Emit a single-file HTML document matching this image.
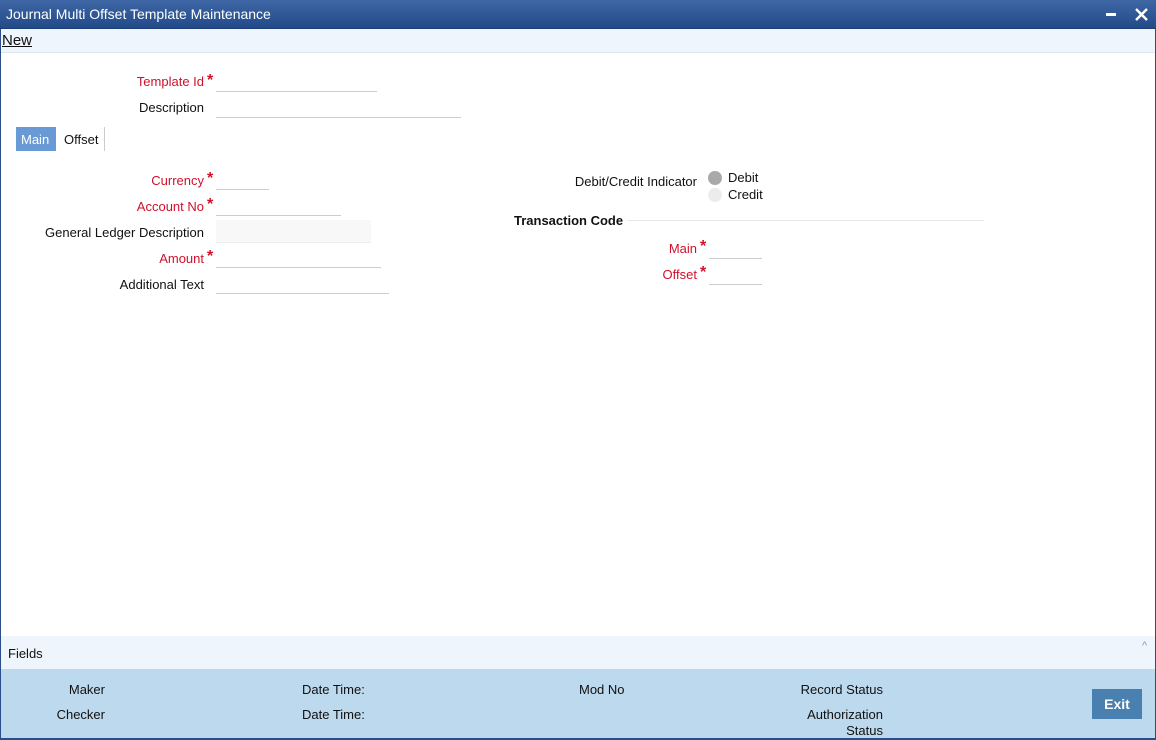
<!DOCTYPE html>
<html><head><style>
*{margin:0;padding:0;box-sizing:border-box}
body{width:1156px;height:740px;position:relative;background:#fff;font-family:"Liberation Sans",Arial,sans-serif;font-size:13px;color:#111;overflow:hidden}
.a{position:absolute;white-space:nowrap}
.r{color:#d0112b}
.s{font-size:16px;font-weight:bold}
.lbl{position:absolute;text-align:right;white-space:nowrap}
.in{position:absolute;border-bottom:1px solid #ccc;height:1px}
</style></head><body>
<div class="a" style="left:0;top:0;width:1156px;height:29px;background:linear-gradient(#3f67a6,#234a88);border-bottom:1px solid #1d3f78"></div>
<div class="a" style="left:6px;top:6px;color:#fff;font-size:14px">Journal Multi Offset Template Maintenance</div>
<div class="a" style="left:1106px;top:13px;width:10px;height:3px;background:#fff"></div>
<svg class="a" style="left:1135px;top:8px" width="13" height="13"><path d="M1 1L12 12M12 1L1 12" stroke="#fff" stroke-width="2.4"/></svg>
<div class="a" style="left:0;top:29px;width:1px;height:711px;background:#2b4e8a"></div>
<div class="a" style="right:0;top:29px;width:1px;height:711px;background:#2b4e8a"></div>
<div class="a" style="left:0;bottom:0;width:1156px;height:2px;background:#2b4e8a"></div>
<div class="a" style="left:1px;top:29px;width:1154px;height:24px;background:#eef5fd;border-bottom:1px solid #dde6ef"></div>
<div class="a" style="left:2px;top:32px;font-size:15px;text-decoration:underline">New</div>

<div class="lbl r" style="right:952px;top:74px">Template Id</div><div class="a r s" style="left:207px;top:72px">*</div>
<div class="in" style="left:216px;top:91px;width:161px"></div>
<div class="lbl" style="right:952px;top:100px">Description</div>
<div class="in" style="left:216px;top:117px;width:245px"></div>

<div class="a" style="left:16px;top:127px;width:40px;height:24px;background:#6a9ad6;color:#fff;padding:5px 0 0 5px">Main</div>
<div class="a" style="left:64px;top:132px">Offset</div>
<div class="a" style="left:104px;top:127px;width:1px;height:24px;background:#ccc"></div>

<div class="lbl r" style="right:952px;top:173px">Currency</div><div class="a r s" style="left:207px;top:170px">*</div>
<div class="in" style="left:216px;top:189px;width:53px"></div>
<div class="lbl r" style="right:952px;top:199px">Account No</div><div class="a r s" style="left:207px;top:196px">*</div>
<div class="in" style="left:216px;top:215px;width:125px"></div>
<div class="lbl" style="right:952px;top:225px">General Ledger Description</div>
<div class="a" style="left:216px;top:220px;width:155px;height:23px;background:#f8f8f8;border-bottom:1px solid #eee"></div>
<div class="lbl r" style="right:952px;top:251px">Amount</div><div class="a r s" style="left:207px;top:248px">*</div>
<div class="in" style="left:216px;top:267px;width:165px"></div>
<div class="lbl" style="right:952px;top:277px">Additional Text</div>
<div class="in" style="left:216px;top:293px;width:173px"></div>

<div class="lbl" style="right:459px;top:174px">Debit/Credit Indicator</div>
<div class="a" style="left:708px;top:171px;width:14px;height:14px;border-radius:50%;background:#a9a9a9"></div>
<div class="a" style="left:728px;top:170px">Debit</div>
<div class="a" style="left:708px;top:188px;width:14px;height:14px;border-radius:50%;background:#ececec"></div>
<div class="a" style="left:728px;top:187px">Credit</div>
<div class="a" style="left:514px;top:213px;font-weight:bold">Transaction Code</div>
<div class="a" style="left:628px;top:220px;width:356px;height:1px;background:#e6e6e6"></div>
<div class="lbl r" style="right:459px;top:241px">Main</div><div class="a r s" style="left:700px;top:238px">*</div>
<div class="in" style="left:709px;top:258px;width:53px"></div>
<div class="lbl r" style="right:459px;top:267px">Offset</div><div class="a r s" style="left:700px;top:264px">*</div>
<div class="in" style="left:709px;top:284px;width:53px"></div>

<div class="a" style="left:1px;top:636px;width:1154px;height:33px;background:#eef5fd"></div>
<div class="a" style="left:8px;top:646px;font-size:13px">Fields</div>
<div class="a" style="left:1142px;top:640px;font-size:11px;color:#7a9cc4">^</div>
<div class="a" style="left:1px;top:669px;width:1154px;height:69px;background:#bdd9ed"></div>
<div class="lbl" style="right:1051px;top:682px">Maker</div>
<div class="lbl" style="right:1051px;top:707px">Checker</div>
<div class="a" style="left:302px;top:682px">Date Time:</div>
<div class="a" style="left:302px;top:707px">Date Time:</div>
<div class="a" style="left:579px;top:682px">Mod No</div>
<div class="lbl" style="right:273px;top:682px">Record Status</div>
<div class="lbl" style="right:273px;top:707px;line-height:16px">Authorization<br>Status</div>
<div class="a" style="left:1092px;top:689px;width:50px;height:30px;background:#4a80b0;color:#fff;font-weight:bold;font-size:14px;text-align:center;line-height:30px">Exit</div>
</body></html>
